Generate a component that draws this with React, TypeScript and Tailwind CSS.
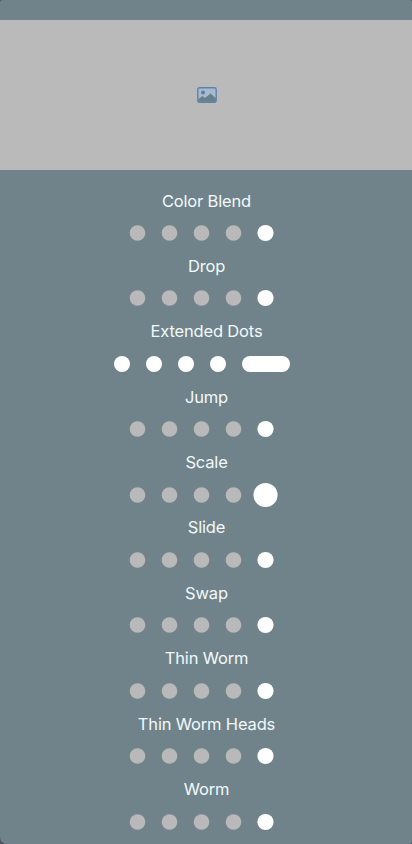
type Effect = 'plain' | 'extended' | 'scale';

const rows: { label: string; effect: Effect }[] = [
  { label: 'Color Blend', effect: 'plain' },
  { label: 'Drop', effect: 'plain' },
  { label: 'Extended Dots', effect: 'extended' },
  { label: 'Jump', effect: 'plain' },
  { label: 'Scale', effect: 'scale' },
  { label: 'Slide', effect: 'plain' },
  { label: 'Swap', effect: 'plain' },
  { label: 'Thin Worm', effect: 'plain' },
  { label: 'Thin Worm Heads', effect: 'plain' },
  { label: 'Worm', effect: 'plain' },
];

function Dot({ className, radius }: { className: string; radius: number }) {
  return (
    <svg width="16" height="16" viewBox="-8 -8 16 16" className={`shrink-0 overflow-visible ${className}`}>
      <circle cx="-0.5" cy="0" r={radius} fill="currentColor" />
    </svg>
  );
}

function Dots({ effect }: { effect: Effect }) {
  if (effect === 'extended') {
    return (
      <div className="mr-2 flex h-4 items-center justify-center gap-4">
        {[0, 1, 2, 3].map((i) => (
          <span key={i} className="size-4 rounded-full bg-white" />
        ))}
        <span className="h-4 w-12 rounded-full bg-white" />
      </div>
    );
  }
  return (
    <div className="mr-2 flex h-4 items-center justify-center gap-4">
      {[0, 1, 2, 3].map((i) => (
        <Dot key={i} className="text-[#b9b9ba]" radius={7.8} />
      ))}
      <Dot className="text-white" radius={effect === 'scale' ? 12.1 : 8.1} />
    </div>
  );
}

export default function App() {
  return (
    <div className="h-[844px] w-full overflow-hidden bg-[#4c5662] font-['Inter','Liberation_Sans',sans-serif]">
      <div className="flex h-full flex-col rounded-tl-[3px] rounded-tr-[2px] rounded-br-[3px] rounded-bl-[7px] bg-[#70838a] pt-5">
        <div className="flex h-[150px] shrink-0 items-center justify-center bg-[#bababa]">
          <svg width="20" height="16" viewBox="0 0 20 16" className="ml-[2px]">
            <rect x="0.8" y="0.8" width="18.4" height="14.4" rx="1.6" fill="#a9bad0" stroke="#5c83ac" strokeWidth="1.4" />
            <circle cx="6" cy="5.4" r="2" fill="#617f99" />
            <path d="M1.3 12.2 5.4 9l2.6 2.1 5.6-4.5 5.2 4.6v3.6H1.3z" fill="#68808b" />
          </svg>
        </div>
        <main className="flex flex-col pt-[18.5px]">
          {rows.map((row) => (
            <section key={row.label} className="flex h-[65.4px] shrink-0 flex-col">
              <h2 className="mb-[12.5px] ml-px text-center text-[16.5px] leading-6 font-normal tracking-[-0.01em] text-[#f1f9fc]">
                {row.label}
              </h2>
              <Dots effect={row.effect} />
            </section>
          ))}
        </main>
      </div>
    </div>
  );
}
